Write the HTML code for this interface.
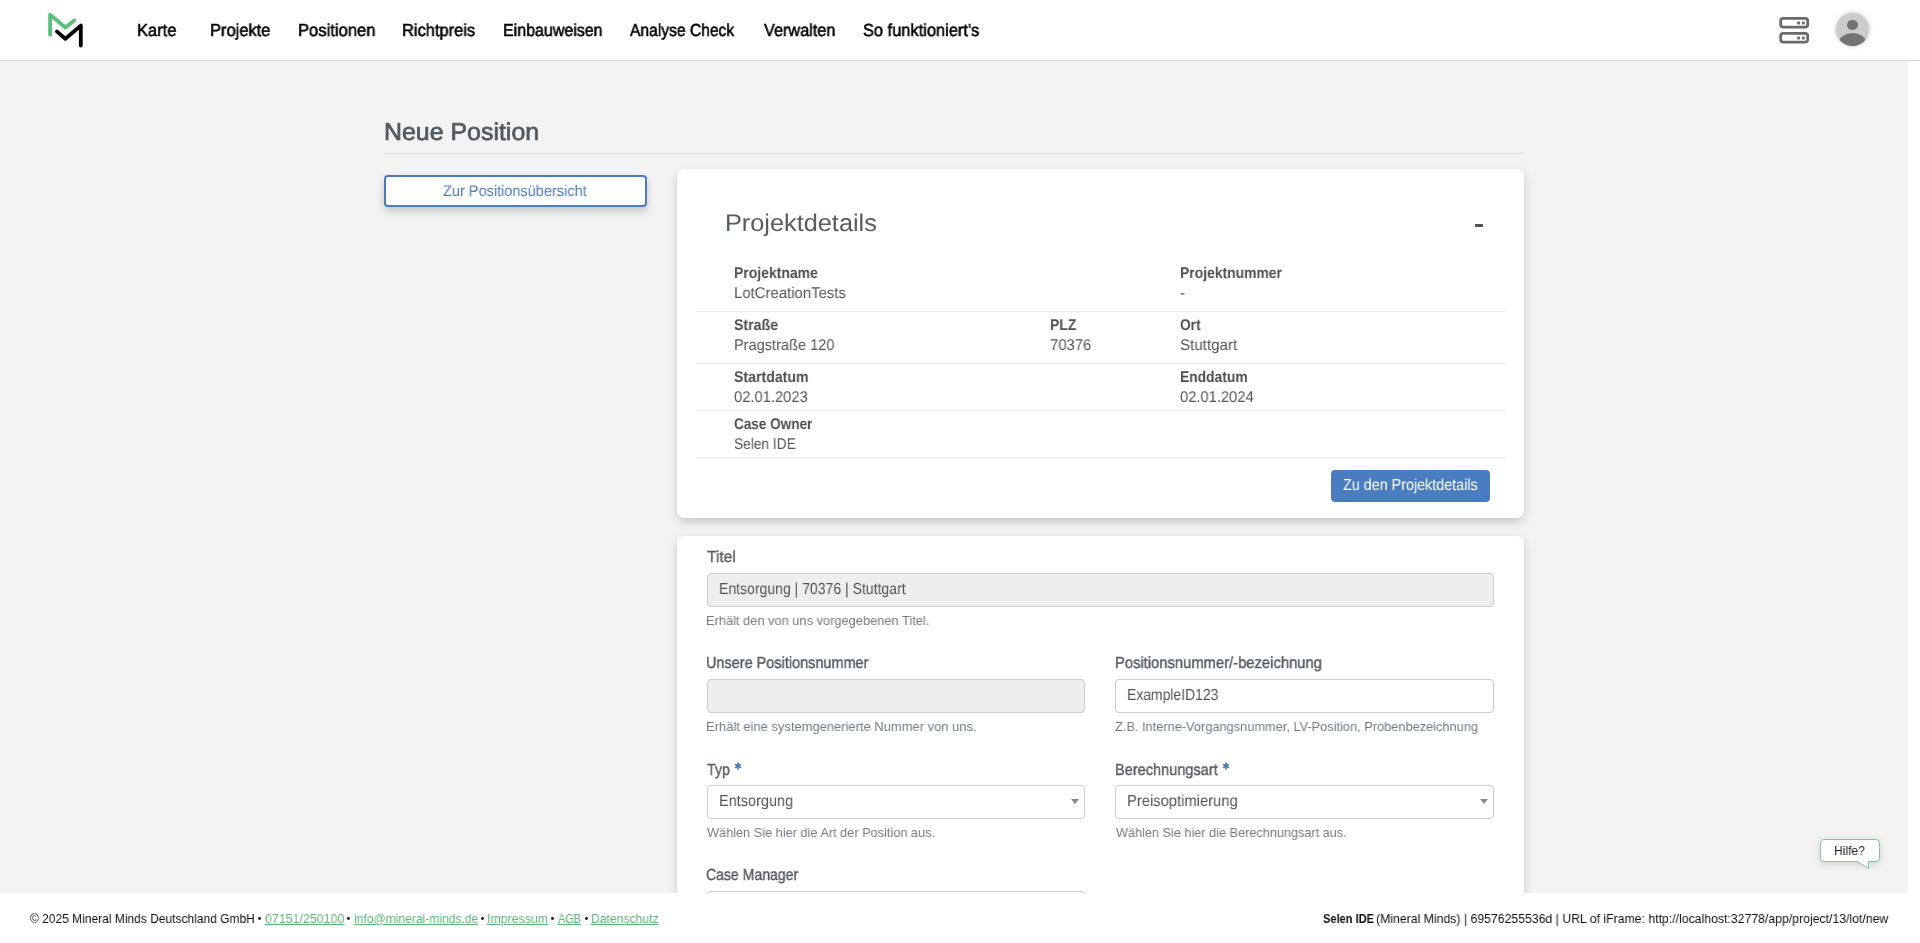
<!DOCTYPE html>
<html><head><meta charset="utf-8"><title>Neue Position</title>
<style>
*{margin:0;padding:0;box-sizing:border-box}
html,body{width:1920px;height:943px;overflow:hidden;background:#fff;font-family:"Liberation Sans",sans-serif}
.t{position:absolute;white-space:nowrap;text-rendering:geometricPrecision;transform-origin:0 0;will-change:transform;line-height:normal;font-family:"Liberation Sans",sans-serif}
.t.h{text-rendering:auto}
.a{position:absolute}
#nav{left:0;top:0;width:1920px;height:61px;background:#fff;border-bottom:1px solid #d6d6d6}
#main{left:0;top:61px;width:1908px;height:832px;background:#f3f3f3;overflow:hidden}
#hr{left:384px;top:153px;width:1140px;height:1px;background:#dcdcdc}
#btn1{left:384px;top:175px;width:263px;height:32px;border:2px solid #4a7cc0;border-radius:4px;background:#fff;box-shadow:0 4px 8px rgba(0,0,0,.2)}
.card{background:#fff;border-radius:7px;box-shadow:0 4px 10px rgba(0,0,0,.18)}
#card1{left:677px;top:169px;width:847px;height:349px}
#card2{left:677px;top:536px;width:847px;height:420px}
.sep{left:696px;width:809px;height:1px;background:#ebebeb}
#btn2{left:1331px;top:470px;width:159px;height:32px;background:#4a7dbf;border-radius:4px}
.inp{border:1px solid #cdcdcd;border-radius:4px;background:#fff}
.dis{background:#eeeeee}
.arr{width:0;height:0;border-left:4px solid transparent;border-right:4px solid transparent;border-top:5px solid #888}
#foot{left:0;top:893px;width:1920px;height:50px;background:#fff}
#hilfe{left:1820px;top:839px;width:60px;height:23px;border:1px solid #7fc797;border-radius:4px;background:#fff;box-shadow:0 2px 8px rgba(0,0,0,.15)}

</style></head><body>
<div class="a" id="main"></div>
<div class="a" id="nav"></div>
<svg class="a" style="left:40px;top:5px" width="50" height="50" viewBox="40 5 50 50">
<polyline points="50.1,34.7 50.1,14.6 65.4,27.6 74.2,20.4" fill="none" stroke="#5abf7a" stroke-width="3.8" stroke-linecap="round" stroke-linejoin="round"/>
<polyline points="57,31.6 65.4,38.8 80.8,25.6 80.8,45.6" fill="none" stroke="#000" stroke-width="3.8" stroke-linecap="round" stroke-linejoin="round"/>
</svg>
<svg class="a" style="left:1770px;top:10px" width="50" height="40" viewBox="1770 10 50 40">
<rect x="1780.7" y="18.3" width="27" height="8.8" rx="2.5" fill="none" stroke="#6b6b6b" stroke-width="2.8"/>
<rect x="1780.7" y="33.3" width="27" height="8.8" rx="2.5" fill="none" stroke="#6b6b6b" stroke-width="2.8"/>
<rect x="1797.2" y="21.6" width="2.8" height="2.8" fill="#6b6b6b"/><rect x="1801.9" y="21.6" width="2.8" height="2.8" fill="#6b6b6b"/>
<rect x="1797.2" y="36.6" width="2.8" height="2.8" fill="#6b6b6b"/><rect x="1801.9" y="36.6" width="2.8" height="2.8" fill="#6b6b6b"/>
</svg>
<div class="a" style="left:1835.5px;top:13.3px;width:33px;height:33px;border-radius:50%;background:#cccccc;box-shadow:0 0 4px rgba(0,0,0,.25);overflow:hidden">
<div class="a" style="left:11.8px;top:6.5px;width:10.4px;height:10.4px;border-radius:50%;background:#737373"></div>
<div class="a" style="left:3.5px;top:19.5px;width:27px;height:18px;border-radius:50%;background:#737373"></div>
</div>
<div class="a" id="hr"></div>
<div class="a" id="btn1"></div>
<div class="a card" id="card1"></div>
<div class="a" style="left:1475px;top:224px;width:8px;height:3px;background:#555"></div>
<div class="a sep" style="top:311px"></div>
<div class="a sep" style="top:363px"></div>
<div class="a sep" style="top:410px"></div>
<div class="a sep" style="top:457px"></div>
<div class="a" id="btn2"></div>
<div class="a card" id="card2"></div>
<div class="a inp dis" style="left:707px;top:573px;width:787px;height:34px"></div>
<div class="a inp dis" style="left:707px;top:679px;width:378px;height:34px"></div>
<div class="a inp" style="left:1115px;top:679px;width:379px;height:34px"></div>
<div class="a inp" style="left:707px;top:785px;width:378px;height:34px"></div>
<div class="a inp" style="left:1115px;top:785px;width:379px;height:34px"></div>
<div class="a arr" style="left:1071px;top:799px"></div>
<div class="a arr" style="left:1480px;top:799px"></div>
<div class="a inp" style="left:707px;top:891px;width:378px;height:34px"></div>
<svg class="a" style="left:732px;top:760px" width="12" height="12" viewBox="0 0 12 12"><g stroke="#4a7dbf" stroke-width="1.7" stroke-linecap="round"><line x1="6" y1="3.2" x2="6" y2="8.8"/><line x1="3.6" y1="4.6" x2="8.4" y2="7.4"/><line x1="3.6" y1="7.4" x2="8.4" y2="4.6"/></g></svg>
<svg class="a" style="left:1220px;top:760px" width="12" height="12" viewBox="0 0 12 12"><g stroke="#4a7dbf" stroke-width="1.7" stroke-linecap="round"><line x1="6" y1="3.2" x2="6" y2="8.8"/><line x1="3.6" y1="4.6" x2="8.4" y2="7.4"/><line x1="3.6" y1="7.4" x2="8.4" y2="4.6"/></g></svg>
<div class="a" id="hilfe"></div>
<div class="a" id="foot"></div>
<svg class="a" style="left:1850px;top:855px" width="25" height="20" viewBox="1850 855 25 20">
<polygon points="1856.5,860.8 1868.5,867.8 1868.5,860.8" fill="#fff"/>
<polyline points="1856.5,861.5 1868.5,868.5 1868.5,861.5" fill="none" stroke="#7fc797" stroke-width="1"/>
</svg>
<div class="a" style="left:258.2px;top:917.2px;width:2.9px;height:2.9px;border-radius:50%;background:#222"></div>
<div class="a" style="left:347.4px;top:917.2px;width:2.9px;height:2.9px;border-radius:50%;background:#222"></div>
<div class="a" style="left:480.9px;top:917.2px;width:2.9px;height:2.9px;border-radius:50%;background:#222"></div>
<div class="a" style="left:551.1px;top:917.2px;width:2.9px;height:2.9px;border-radius:50%;background:#222"></div>
<div class="a" style="left:584.8px;top:917.2px;width:2.9px;height:2.9px;border-radius:50%;background:#222"></div>

<div class="t" id="t0" style="left:137.17px;top:20.00px;font-size:17.40px;font-weight:400;color:#000;transform:scaleX(0.9491);-webkit-text-stroke:0.55px #000;">Karte</div>
<div class="t" id="t1" style="left:210.17px;top:20.00px;font-size:17.40px;font-weight:400;color:#000;transform:scaleX(0.9473);-webkit-text-stroke:0.55px #000;">Projekte</div>
<div class="t" id="t2" style="left:297.66px;top:20.00px;font-size:17.40px;font-weight:400;color:#000;transform:scaleX(0.9546);-webkit-text-stroke:0.55px #000;">Positionen</div>
<div class="t" id="t3" style="left:401.77px;top:20.00px;font-size:17.40px;font-weight:400;color:#000;transform:scaleX(0.9475);-webkit-text-stroke:0.55px #000;">Richtpreis</div>
<div class="t" id="t4" style="left:502.51px;top:20.00px;font-size:17.40px;font-weight:400;color:#000;transform:scaleX(0.9191);-webkit-text-stroke:0.55px #000;">Einbauweisen</div>
<div class="t" id="t5" style="left:630.30px;top:20.00px;font-size:17.40px;font-weight:400;color:#000;transform:scaleX(0.8979);-webkit-text-stroke:0.55px #000;">Analyse Check</div>
<div class="t" id="t6" style="left:763.90px;top:20.00px;font-size:17.40px;font-weight:400;color:#000;transform:scaleX(0.9345);-webkit-text-stroke:0.55px #000;">Verwalten</div>
<div class="t" id="t7" style="left:862.64px;top:20.00px;font-size:17.40px;font-weight:400;color:#000;transform:scaleX(0.9438);-webkit-text-stroke:0.55px #000;">So funktioniert's</div>
<div class="t" id="t8" style="left:384.46px;top:119.00px;font-size:24.40px;font-weight:400;color:#52595f;transform:scaleX(1.0213);-webkit-text-stroke:0.70px #52595f;">Neue Position</div>
<div class="t" id="t9" style="left:443.22px;top:183.00px;font-size:15.40px;font-weight:400;color:#4a7cc0;transform:scaleX(0.9435);">Zur Positionsübersicht</div>
<div class="t" id="t10" style="left:724.91px;top:210.00px;font-size:24.10px;font-weight:400;color:#555c63;transform:scaleX(1.0499);">Projektdetails</div>
<div class="t" id="t11" style="left:734.10px;top:265.00px;font-size:15.55px;font-weight:700;color:#4f4f4f;transform:scaleX(0.8978);">Projektname</div>
<div class="t" id="t12" style="left:1179.61px;top:265.00px;font-size:15.55px;font-weight:700;color:#4f4f4f;transform:scaleX(0.8936);">Projektnummer</div>
<div class="t" id="t13" style="left:733.85px;top:285.00px;font-size:15.55px;font-weight:400;color:#555;transform:scaleX(0.9590);">LotCreationTests</div>
<div class="t" id="t14" style="left:1179.90px;top:285.00px;font-size:15.55px;font-weight:400;color:#555;">-</div>
<div class="t" id="t15" style="left:734.34px;top:317.00px;font-size:15.55px;font-weight:700;color:#4f4f4f;transform:scaleX(0.9107);">Straße</div>
<div class="t" id="t16" style="left:1049.60px;top:317.00px;font-size:15.55px;font-weight:700;color:#4f4f4f;transform:scaleX(0.9010);">PLZ</div>
<div class="t" id="t17" style="left:1179.97px;top:317.00px;font-size:15.55px;font-weight:700;color:#4f4f4f;transform:scaleX(0.8826);">Ort</div>
<div class="t" id="t18" style="left:733.58px;top:337.00px;font-size:15.55px;font-weight:400;color:#555;transform:scaleX(0.9371);">Pragstraße 120</div>
<div class="t" id="t19" style="left:1049.83px;top:337.00px;font-size:15.55px;font-weight:400;color:#555;transform:scaleX(0.9548);">70376</div>
<div class="t" id="t20" style="left:1179.82px;top:337.00px;font-size:15.55px;font-weight:400;color:#555;transform:scaleX(0.9732);">Stuttgart</div>
<div class="t" id="t21" style="left:734.34px;top:369.00px;font-size:15.55px;font-weight:700;color:#4f4f4f;transform:scaleX(0.9077);">Startdatum</div>
<div class="t" id="t22" style="left:1179.61px;top:369.00px;font-size:15.55px;font-weight:700;color:#4f4f4f;transform:scaleX(0.8894);">Enddatum</div>
<div class="t" id="t23" style="left:734.13px;top:389.00px;font-size:15.55px;font-weight:400;color:#555;transform:scaleX(0.9481);">02.01.2023</div>
<div class="t" id="t24" style="left:1179.93px;top:389.00px;font-size:15.55px;font-weight:400;color:#555;transform:scaleX(0.9469);">02.01.2024</div>
<div class="t" id="t25" style="left:734.18px;top:416.00px;font-size:15.55px;font-weight:700;color:#4f4f4f;transform:scaleX(0.8717);">Case Owner</div>
<div class="t" id="t26" style="left:734.08px;top:436.00px;font-size:15.55px;font-weight:400;color:#555;transform:scaleX(0.8816);">Selen IDE</div>
<div class="t" id="t27" style="left:1343.05px;top:477.00px;font-size:16.00px;font-weight:400;color:#fff;transform:scaleX(0.8962);">Zu den Projektdetails</div>
<div class="t" id="t28" style="left:706.81px;top:548.00px;font-size:16.10px;font-weight:400;color:#555b62;transform:scaleX(0.9669);-webkit-text-stroke:0.40px #555b62;">Titel</div>
<div class="t" id="t29" style="left:705.92px;top:654.00px;font-size:16.10px;font-weight:400;color:#555b62;transform:scaleX(0.8991);-webkit-text-stroke:0.40px #555b62;">Unsere Positionsnummer</div>
<div class="t" id="t30" style="left:1114.51px;top:654.00px;font-size:16.10px;font-weight:400;color:#555b62;transform:scaleX(0.9177);-webkit-text-stroke:0.40px #555b62;">Positionsnummer/-bezeichnung</div>
<div class="t" id="t31" style="left:706.73px;top:761.00px;font-size:16.10px;font-weight:400;color:#555b62;transform:scaleX(0.8841);-webkit-text-stroke:0.40px #555b62;">Typ</div>
<div class="t" id="t32" style="left:1114.52px;top:761.00px;font-size:16.10px;font-weight:400;color:#555b62;transform:scaleX(0.9039);-webkit-text-stroke:0.40px #555b62;">Berechnungsart</div>
<div class="t" id="t33" style="left:706.30px;top:866.00px;font-size:16.10px;font-weight:400;color:#555b62;transform:scaleX(0.8734);-webkit-text-stroke:0.40px #555b62;">Case Manager</div>
<div class="t" id="t34" style="left:718.86px;top:581.00px;font-size:16.00px;font-weight:400;color:#555;transform:scaleX(0.8764);">Entsorgung | 70376 | Stuttgart</div>
<div class="t" id="t35" style="left:1127.27px;top:687.00px;font-size:16.00px;font-weight:400;color:#555;transform:scaleX(0.8704);">ExampleID123</div>
<div class="t" id="t36" style="left:718.82px;top:793.00px;font-size:16.00px;font-weight:400;color:#555;transform:scaleX(0.9052);">Entsorgung</div>
<div class="t" id="t37" style="left:1127.20px;top:793.00px;font-size:16.00px;font-weight:400;color:#555;transform:scaleX(0.9222);">Preisoptimierung</div>
<div class="t h" id="t38" style="left:706.02px;top:613.00px;font-size:13.10px;font-weight:400;color:#737b82;transform:scaleX(0.9799);">Erhält den von uns vorgegebenen Titel.</div>
<div class="t h" id="t39" style="left:706.01px;top:719.00px;font-size:13.10px;font-weight:400;color:#737b82;transform:scaleX(0.9885);">Erhält eine systemgenerierte Nummer von uns.</div>
<div class="t h" id="t40" style="left:1115.31px;top:719.00px;font-size:13.10px;font-weight:400;color:#737b82;transform:scaleX(0.9766);">Z.B. Interne-Vorgangsnummer, LV-Position, Probenbezeichnung</div>
<div class="t h" id="t41" style="left:707.00px;top:825.00px;font-size:13.10px;font-weight:400;color:#737b82;transform:scaleX(0.9729);">Wählen Sie hier die Art der Position aus.</div>
<div class="t h" id="t42" style="left:1115.70px;top:825.00px;font-size:13.10px;font-weight:400;color:#737b82;transform:scaleX(0.9693);">Wählen Sie hier die Berechnungsart aus.</div>
<div class="t h" id="t43" style="left:1834.49px;top:843.00px;font-size:13.20px;font-weight:400;color:#222;transform:scaleX(0.9131);">Hilfe?</div>
<div class="t h" id="t44" style="left:30.02px;top:911.00px;font-size:13.40px;font-weight:400;color:#111;transform:scaleX(0.8955);">© 2025 Mineral Minds Deutschland GmbH</div>
<div class="t h" id="t45" style="left:264.84px;top:911.00px;font-size:13.40px;font-weight:400;color:#5cb87a;transform:scaleX(0.9263);text-decoration:underline;">07151/250100</div>
<div class="t h" id="t46" style="left:353.78px;top:911.00px;font-size:13.40px;font-weight:400;color:#5cb87a;transform:scaleX(0.9010);text-decoration:underline;">info@mineral-minds.de</div>
<div class="t h" id="t47" style="left:487.19px;top:911.00px;font-size:13.40px;font-weight:400;color:#5cb87a;transform:scaleX(0.9236);text-decoration:underline;">Impressum</div>
<div class="t h" id="t48" style="left:558.30px;top:911.00px;font-size:13.40px;font-weight:400;color:#5cb87a;transform:scaleX(0.8134);text-decoration:underline;">AGB</div>
<div class="t h" id="t49" style="left:590.80px;top:911.00px;font-size:13.40px;font-weight:400;color:#5cb87a;transform:scaleX(0.9095);text-decoration:underline;">Datenschutz</div>
<div class="t h" id="t50" style="left:1322.95px;top:911.00px;font-size:13.40px;font-weight:700;color:#111;transform:scaleX(0.8252);">Selen IDE</div>
<div class="t h" id="t51" style="left:1376.07px;top:911.00px;font-size:13.40px;font-weight:400;color:#111;transform:scaleX(0.9156);">(Mineral Minds) | 69576255536d | URL of iFrame: http://localhost:32778/app/project/13/lot/new</div>
</body></html>
